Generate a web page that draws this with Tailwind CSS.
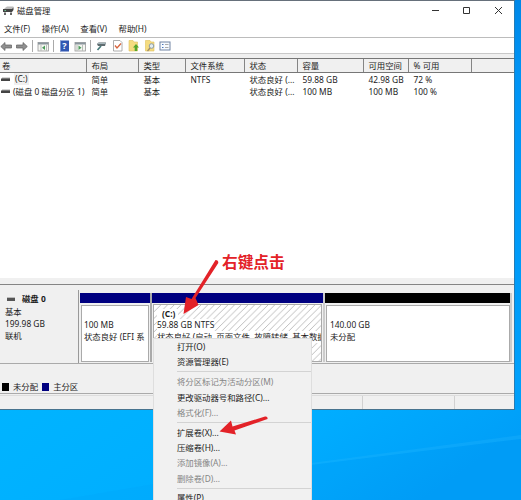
<!DOCTYPE html>
<html lang="zh-CN">
<head>
<meta charset="utf-8">
<title>磁盘管理</title>
<script src="https://cdn.jsdelivr.net/npm/@tailwindcss/browser@4"></script>
</head>
<body class="relative h-[500px] w-[521px] overflow-hidden bg-[#00adff] font-['Noto_Sans','Noto_Sans_CJK_SC',sans-serif] text-[8.400px] leading-[12px] whitespace-nowrap text-[#1c1c1c]">
<!-- Desktop wallpaper -->
<svg class="absolute inset-0" width="521" height="500">
  <defs>
    <linearGradient id="side" x1="0" y1="0" x2="0" y2="1"><stop offset="0" stop-color="#0088e8"/><stop offset=".15" stop-color="#0094f5"/><stop offset=".75" stop-color="#00a0fb"/><stop offset="1" stop-color="#009cf4"/></linearGradient>
    <linearGradient id="floor" x1="0" y1="0" x2="1" y2=".25"><stop offset="0" stop-color="#00b4ff"/><stop offset=".6" stop-color="#00adff"/><stop offset="1" stop-color="#009ff8"/></linearGradient>
  </defs>
  <rect width="521" height="500" fill="url(#side)"/>
  <rect y="408" width="521" height="92" fill="url(#floor)"/>
  <path d="M311 463L521 435V439L311 465Z" fill="#36bcff" opacity=".2"/>
  <path d="M311 465L521 439V500H311Z" fill="#0088e8" opacity=".1"/>
  <path d="M60 500L154 484V500Z" fill="#009cf2" opacity=".15"/>
</svg>

<main class="relative flex h-[410px] w-[515px] flex-col border-t border-r border-b border-t-[#66707b] border-r-[#267cb5] border-b-[#47738e] bg-[#f0f0f0]">
  <header class="flex h-[19px] items-center bg-white pl-[3px]">
    <svg class="mt-[1px]" width="11" height="10" viewBox="0 0 11 10"><path d="M2 2L4 .5H10.5L9 3H1Z" fill="#bbb"/><path d="M0 3H9L10.5 1V4L9 6H0Z" fill="#444"/><path d="M1 6.5H3V9H1ZM7 6.5H9V9H7Z" fill="#666"/><path d="M1.500 4.500H3" stroke="#6dc18c"/></svg>
    <h1 class="ml-[3px] text-[8.400px]">磁盘管理</h1>
    <svg class="ml-auto" width="85" height="19" viewBox="0 0 85 19" fill="none" stroke="#333" stroke-width="1"><path d="M3 9.500H10M34.500 6.500H40.500V12.500H34.500ZM66 6L73 13M73 6L66 13"/></svg>
  </header>
  <nav class="flex h-[17px] items-center gap-[11.500px] bg-white pt-[2px] pl-[4px]"><span>文件(F)</span><span>操作(A)</span><span>查看(V)</span><span>帮助(H)</span></nav>
  <div class="h-[17px] border-t border-b border-t-[#bcbcbc] border-b-[#c9c9c9] bg-white">
    <svg width="180" height="15" viewBox="0 0 180 15">
      <g fill="#909090" stroke="#606060" stroke-width=".7"><path d="M.8 8.500L5 4.500V7H11.500V10H5V12.500Z"/><path d="M27.300 8.500L23 4.500V7H16.500V10H23V12.500Z"/></g>
      <path d="M32.500 2V14M53.500 2V14M90.500 2V14" stroke="#aaa"/>
      <g><rect x="38" y="4.500" width="10.500" height="8.500" fill="#f5f6f2" stroke="#999" stroke-width=".8"/><path d="M38 5.500H48.500" stroke="#8a959d" stroke-width="2"/><path d="M41 7V13M46.500 7V13" stroke="#b8beb9"/><path d="M45 7.500V12L42 9.700Z" fill="#4b9b59"/></g>
      <rect x="60" y="2.500" width="9" height="11" fill="#3157b2"/><path d="M60.500 3V13" stroke="#8098d0"/><text x="62.300" y="11.400" font-size="9" font-weight="700" fill="white">?</text>
      <g><rect x="75" y="4.500" width="10.500" height="8.500" fill="#f5f6f2" stroke="#999" stroke-width=".8"/><path d="M75 5.500H85.500" stroke="#8a959d" stroke-width="2"/><path d="M77 7V13M82.500 7V13" stroke="#b8beb9"/><path d="M78.500 7.500V12L81.500 9.700Z" fill="#4b9b59"/></g>
      <path d="M97 6L98.500 4.500H106L105 8H98Z" fill="#606c70"/><path d="M98 5.500H105.500" stroke="#a6b7bc"/><path d="M101 8L97.500 12" stroke="#477b7b" stroke-width="1.700"/>
      <path d="M113.500 2.500H120L122 4.500V13H113.500Z" fill="#fff" stroke="#999" stroke-width=".8"/><path d="M115 7.500L117 10L121 5.500" fill="none" stroke="#d7643d" stroke-width="1.300"/>
      <path d="M129 2.500H133L134 4H137.500V13H129Z" fill="#f5dc80" stroke="#dfc15d" stroke-width=".6"/><path d="M136 6L139 9.500H137.200V13H134.700V9.500H133Z" fill="#55a62d"/>
      <path d="M145.500 2.500H150L151 4H154V13H145.500Z" fill="#f5dc80" stroke="#dfc15d" stroke-width=".6"/><circle cx="151.500" cy="8" r="2.300" fill="#e3edf1" stroke="#8c9ca4"/><path d="M150 10L147.500 13" stroke="#a18e65" stroke-width="1.300"/>
      <rect x="160" y="4" width="10" height="8" fill="#f6faff" stroke="#7184a4"/><path d="M162 6.500H163.500M162 9.500H163.500" stroke="#4b76bb"/><path d="M165 6.500H168.500M165 9.500H168.500" stroke="#aaa"/>
    </svg>
  </div>

  <section class="mt-[4px] h-[221px] border-t border-t-[#777] bg-white">
    <div class="grid h-[14px] grid-cols-[87px_52px_47px_59px_53px_66px_45px_63px_1fr] border-b border-b-[#777] bg-[#f0f0f0] leading-[13px] [&>*]:border-r [&>*]:border-[#858585] [&>*]:pl-[4.500px]">
      <span class="!pl-[2px]">卷</span><span>布局</span><span>类型</span><span>文件系统</span><span>状态</span><span>容量</span><span>可用空间</span><span>% 可用</span><i class="!border-r-0"></i>
    </div>
    <div class="grid h-[12px] grid-cols-[87px_52px_47px_59px_53px_66px_45px_63px_1fr] leading-[13px] [&>*]:pl-[4.500px]">
      <span class="flex items-center !pl-[1px]"><svg width="10" height="5"><path d="M1 1H9V4H0V2Z" fill="#444"/><path d="M1 1H9" stroke="#aaa"/></svg><span class="ml-[3px] bg-[#f0f0f0] px-[1px] leading-[12px]">(C:)</span></span><span>简单</span><span>基本</span><span>NTFS</span><span>状态良好 (...</span><span>59.88 GB</span><span>42.98 GB</span><span>72 %</span>
    </div>
    <div class="grid h-[13px] grid-cols-[87px_52px_47px_59px_53px_66px_45px_63px_1fr] leading-[13px] [&>*]:pl-[4.500px]">
      <span class="flex items-center !pl-[1px]"><svg width="10" height="5"><path d="M1 1H9V4H0V2Z" fill="#444"/><path d="M1 1H9" stroke="#aaa"/></svg><span class="ml-[2px]">(磁盘 0 磁盘分区 1)</span></span><span>简单</span><span>基本</span><span></span><span>状态良好 (...</span><span>100 MB</span><span>100 MB</span><span>100 %</span>
    </div>
  </section>
  <div class="h-[7px] border-b border-b-[#858585]"></div>

  <section class="mt-[5px] flex h-[75px] border-b border-b-[#aaa]">
    <aside class="w-[79px] border-r border-r-[#999] pl-[5px]">
      <div class="flex h-[16px] items-center pt-[3px] font-bold"><svg class="mr-[6px] ml-[2px]" width="9" height="6"><path d="M0 2H8V5H0Z" fill="#555"/><path d="M0 1.500H8" stroke="#bbb"/></svg>磁盘 0</div>
      <p>基本</p><p>199.98 GB</p><p>联机</p>
    </aside>
    <div class="flex pt-[3px] [&>*]:h-[69px]">
      <article class="w-[73px] border-r-2 border-r-[#aaa] pl-[1px]">
        <div class="h-[10px] bg-[#000080]"></div>
        <div class="mt-[2px] ml-[1px] h-[57px] w-[68px] overflow-hidden border border-[#aaa] bg-white pt-[13px] pl-[2px]"><p>100 MB</p><p>状态良好 (EFI 系</p></div>
      </article>
      <article class="w-[173px] border-r-2 border-r-[#ccc]">
        <div class="h-[10px] bg-[#000080]"></div>
        <div class="relative mt-[1px] mr-[1px] ml-[1px] h-[58px] overflow-hidden border border-[#aaa] bg-white pl-[3px]">
          <svg class="absolute inset-0" width="170" height="57"><defs><pattern id="hatch" width="6.700" height="6.700" patternUnits="userSpaceOnUse"><path d="M-1 7.700L7.700 -1M-1 1L1 -1M5.700 7.700L7.700 5.700" stroke="#a2a2a2" stroke-width=".7"/></pattern></defs><rect width="170" height="57" fill="url(#hatch)"/></svg>
          <div class="relative pt-[4px]"><p class="w-fit bg-white pr-[3px] pl-[5px] leading-[10px] font-bold">(C:)</p><p class="w-fit bg-white">59.88 GB NTFS</p><p class="w-fit bg-white">状态良好 (启动, 页面文件, 故障转储, 基本数据</p></div>
        </div>
      </article>
      <article class="w-[187px] border-r-2 border-r-[#ccc]">
        <div class="h-[10px] bg-black"></div>
        <div class="mt-[2px] ml-[1px] h-[57px] border border-[#aaa] bg-white pt-[13px] pl-[3px]"><p>140.00 GB</p><p>未分配</p></div>
      </article>
    </div>
  </section>
  <footer class="mt-[14px] flex h-[16px] items-center border-b border-b-[#aaa] pt-[2px] pl-[2px]"><i class="h-[8px] w-[7px] bg-black"></i><span class="ml-[4px]">未分配</span><i class="ml-[4px] h-[8px] w-[7px] bg-[#000080]"></i><span class="ml-[4px]">主分区</span></footer>
  <div class="mt-[1px] flex h-[14px] border-t border-t-[#ddd]"><i class="w-[363px] border-r border-[#d1d1d1]"></i><i class="w-[92px] border-r border-[#d1d1d1]"></i></div>
</main>

<!-- Context menu over the selected volume -->
<div class="absolute top-[338px] left-[153px] h-[162px] w-[159px] overflow-hidden border-t border-r border-l border-[#dedede] bg-[#f1f1f1] pl-[23px] leading-[15.200px]">
  <p>打开(O)</p><p>资源管理器(E)</p>
  <div class="mt-[2px] mb-[2px] border-t border-[#d3d3d3]"></div>
  <p class="text-[#858585]">将分区标记为活动分区(M)</p><p>更改驱动器号和路径(C)...</p><p class="text-[#858585]">格式化(F)...</p>
  <div class="mt-[2px] mb-[2px] border-t border-[#d3d3d3]"></div>
  <p>扩展卷(X)...</p><p>压缩卷(H)...</p><p class="text-[#858585]">添加镜像(A)...</p><p class="text-[#858585]">删除卷(D)...</p>
  <div class="mt-[2px] mb-[1px] border-t border-[#d3d3d3]"></div>
  <p>属性(P)</p>
</div>

<!-- Tutorial annotations -->
<svg class="absolute inset-0" width="521" height="500"><g fill="#e32228"><path d="M215.500 260Q218.500 260 218.300 263L195.500 298L198.500 305L183.500 314L186 297L191.500 299Z"/><path d="M265 416.500Q268 416 267.500 419L234.500 430.500L236 434.500L219.500 431.500L231 420.500L232.500 426.500Z"/></g></svg>
<p class="absolute top-[251px] left-[222px] text-[15.700px] leading-[22px] font-bold text-[#e32228]">右键点击</p>
</body>
</html>
